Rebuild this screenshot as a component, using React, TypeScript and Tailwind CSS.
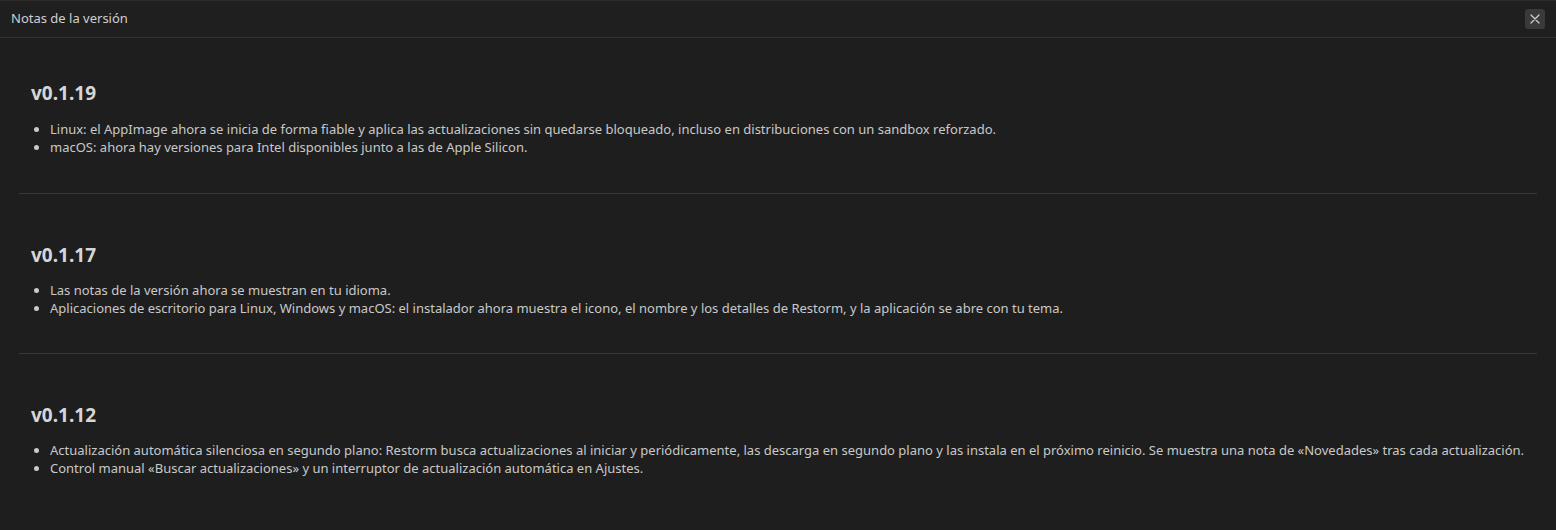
import React from "react";

const sections = [
  {
    v: "v0.1.19",
    items: [
      "Linux: el AppImage ahora se inicia de forma fiable y aplica las actualizaciones sin quedarse bloqueado, incluso en distribuciones con un sandbox reforzado.",
      "macOS: ahora hay versiones para Intel disponibles junto a las de Apple Silicon.",
    ],
  },
  {
    v: "v0.1.17",
    items: [
      "Las notas de la versión ahora se muestran en tu idioma.",
      "Aplicaciones de escritorio para Linux, Windows y macOS: el instalador ahora muestra el icono, el nombre y los detalles de Restorm, y la aplicación se abre con tu tema.",
    ],
  },
  {
    v: "v0.1.12",
    items: [
      "Actualización automática silenciosa en segundo plano: Restorm busca actualizaciones al iniciar y periódicamente, las descarga en segundo plano y las instala en el próximo reinicio. Se muestra una nota de «Novedades» tras cada actualización.",
      "Control manual «Buscar actualizaciones» y un interruptor de actualización automática en Ajustes.",
    ],
  },
];

const sectionClasses = [
  "px-[12px] pb-[37px] mb-[47px] border-b border-b-[#3a3a3a]",
  "px-[12px] pb-[36px] mb-[47px] border-b border-b-[#3a3a3a]",
  "px-[12px]",
];
const listClasses = [
  "mt-[13px] list-disc pl-[19px] text-[13px] leading-[18px] text-[#c9c9c9]",
  "mt-[12px] list-disc pl-[19px] text-[13px] leading-[18px] text-[#c9c9c9]",
  "mt-[12px] list-disc pl-[19px] text-[13px] leading-[18px] text-[#c9c9c9]",
];

export default function App() {
  return (
    <div
      className="w-[1556px] h-[530px] overflow-hidden bg-[#1e1e1e] text-[#cccccc]"
      style={{ fontFamily: '"Noto Sans", "Open Sans", sans-serif' }}
    >
      <div className="h-[38px] flex items-center justify-between pl-[11px] pr-[11px] border-t border-t-[#2c2c2c] border-b border-b-[#353535] bg-[#1f1f1f]">
        <span className="text-[13px] text-[#cfcfcf]">Notas de la versión</span>
        <button className="w-[20px] h-[20px] rounded-[3px] bg-[#3a3a3a] flex items-center justify-center">
          <svg width="12" height="12" viewBox="0 0 12 12" fill="none" stroke="#d0d0d0" strokeWidth="1.2" strokeLinecap="round">
            <path d="M2 2L10 10M10 2L2 10" />
          </svg>
        </button>
      </div>
      <div className="px-[19px] pt-[41px]">
        {sections.map((s, i) => (
          <div key={s.v} className={sectionClasses[i]}>
            <h2 className="text-[19px] leading-[28px] font-bold text-[#d6d6d6]">{s.v}</h2>
            <ul className={listClasses[i]}>
              {s.items.map((t) => (
                <li key={t}>{t}</li>
              ))}
            </ul>
          </div>
        ))}
      </div>
    </div>
  );
}
